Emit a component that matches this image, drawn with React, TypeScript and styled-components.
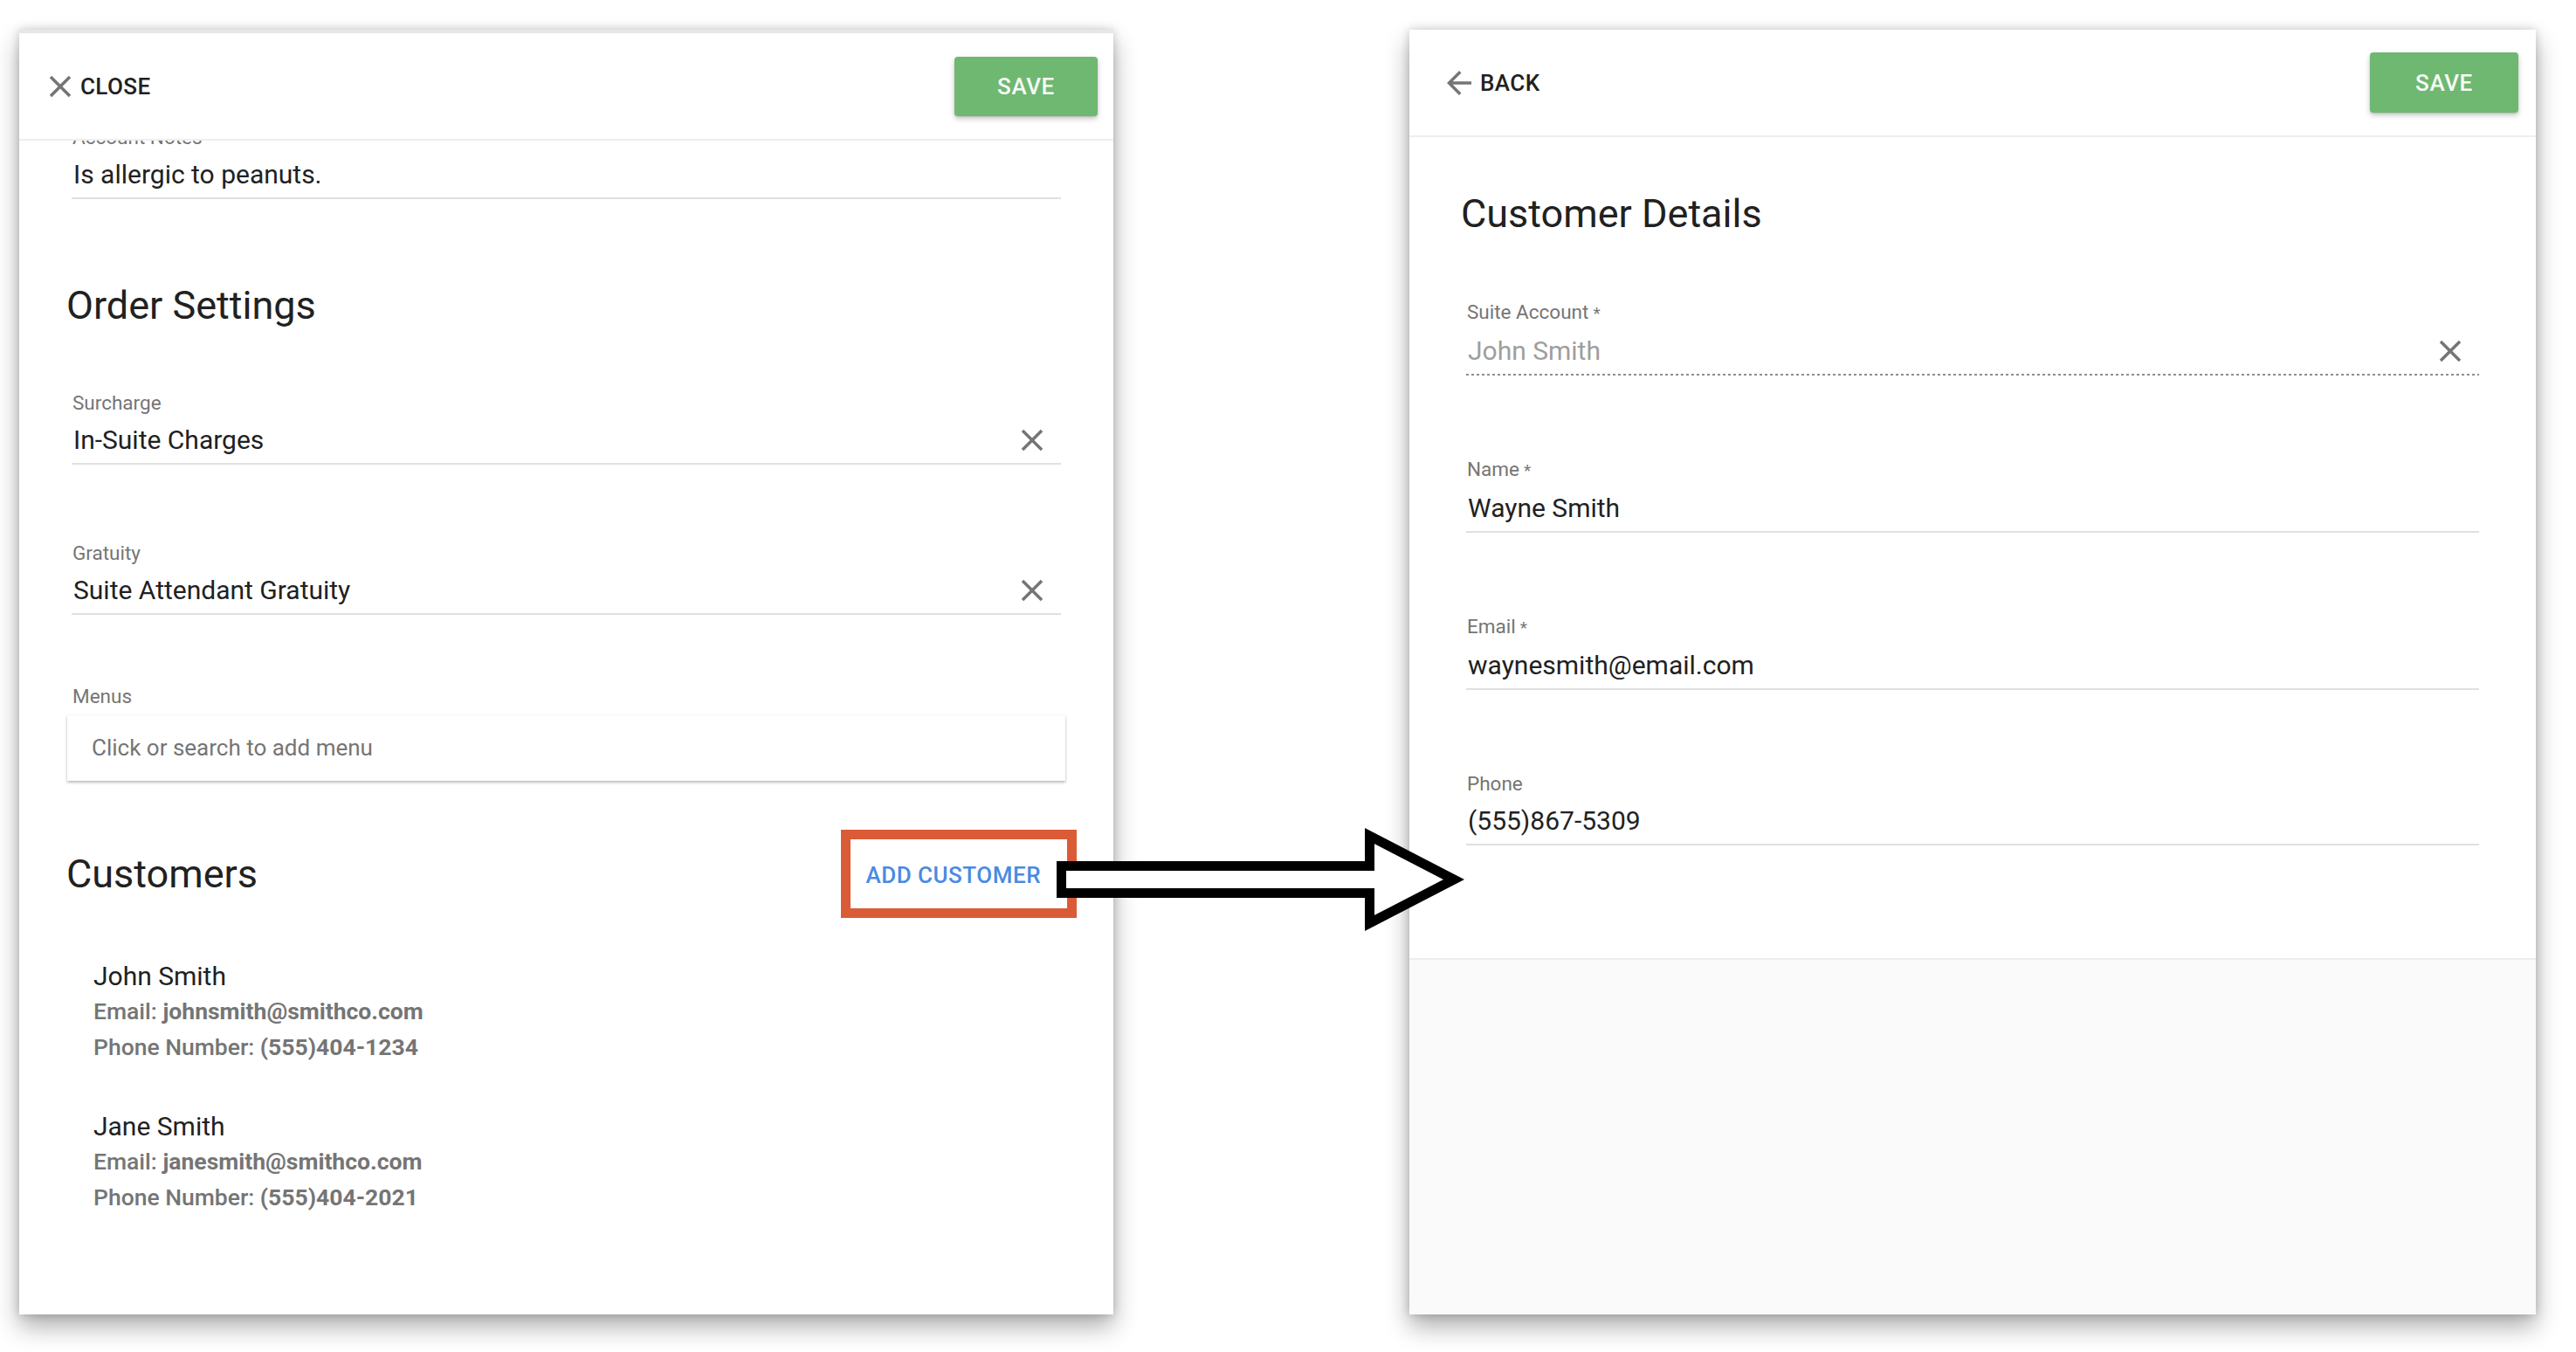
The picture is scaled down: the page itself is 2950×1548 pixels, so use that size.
import React from "react";
import styled, { createGlobalStyle } from "styled-components";

const GlobalStyle = createGlobalStyle`
  html, body { margin: 0; padding: 0; background: #ffffff; }
  body { font-family: Roboto, "Noto Sans", Arial, sans-serif; -webkit-font-smoothing: antialiased; }
  * { box-sizing: border-box; }
`;

const Page = styled.div`
  position: relative;
  width: 2950px;
  height: 1548px;
  overflow: hidden;
  display: flex;
  align-items: flex-start;
  padding: 34px 0 0 22px;
  gap: 339px;
`;

const Panel = styled.section<{ $w: number; $band?: boolean }>`
  width: ${(p) => p.$w}px;
  height: 1471px;
  flex: none;
  background: #ffffff;
  display: flex;
  flex-direction: column;
  border-top: ${(p) => (p.$band ? "4px solid #e7e7e7" : "none")};
  box-shadow: 0 14px 26px rgba(0, 0, 0, 0.32), 0 0 10px rgba(0, 0, 0, 0.18);
  overflow: hidden;
`;

const Header = styled.header<{ $pl: number; $pr: number }>`
  flex: none;
  height: 123px;
  border-bottom: 2px solid #eeeeee;
  display: flex;
  align-items: center;
  justify-content: space-between;
  padding: 0 ${(p) => p.$pr}px 0 ${(p) => p.$pl}px;
`;

const NavButton = styled.button<{ $gap: number }>`
  display: flex;
  align-items: center;
  gap: ${(p) => p.$gap}px;
  background: none;
  border: none;
  padding: 0;
  font-family: Roboto, Arial, sans-serif;
  font-size: 26px;
  font-weight: 500;
  letter-spacing: 0.4px;
  color: #212121;
  text-transform: uppercase;
  cursor: pointer;
`;

const Icon = styled.svg`
  width: 42px;
  height: 42px;
  fill: #757575;
  flex: none;
`;

const SaveButton = styled.button<{ $w: number; $h: number }>`
  width: ${(p) => p.$w}px;
  height: ${(p) => p.$h}px;
  background: #6fb871;
  color: rgba(255, 255, 255, 0.96);
  border: none;
  border-radius: 4px;
  font-family: Roboto, Arial, sans-serif;
  font-size: 26px;
  font-weight: 500;
  letter-spacing: 0.6px;
  box-shadow: 0 3px 6px rgba(0, 0, 0, 0.22), 0 1px 2px rgba(0, 0, 0, 0.12);
  cursor: pointer;
`;

const Body = styled.div<{ $px: number; $pb?: number; $grow?: boolean; $divider?: boolean }>`
  flex: ${(p) => (p.$grow ? "1 1 auto" : "none")};
  overflow: hidden;
  padding: 0 ${(p) => p.$px}px ${(p) => p.$pb ?? 0}px;
  border-bottom: ${(p) => (p.$divider ? "2px solid #eeeeee" : "none")};
  display: flex;
  flex-direction: column;
`;

const Footer = styled.div`
  flex: 1 1 auto;
  background: #fafafa;
`;

const Field = styled.div<{ $mt: number }>`
  margin: ${(p) => p.$mt}px 7px 0;
  flex: none;
`;

const FieldLabel = styled.label<{ $mt?: number; $mx?: number }>`
  display: block;
  margin: ${(p) => p.$mt ?? 0}px ${(p) => p.$mx ?? 0}px 0;
  padding-left: 1px;
  font-size: 22.5px;
  line-height: 26px;
  color: #757575;
  white-space: nowrap;
`;

const Required = styled.span`
  margin-left: 5px;
  font-size: 19px;
`;

const InputRow = styled.div<{ $disabled?: boolean }>`
  margin-top: 12px;
  display: flex;
  align-items: center;
  padding-bottom: ${(p) => (p.$disabled ? 10 : 8)}px;
  border-bottom: ${(p) => (p.$disabled ? "none" : "2px solid #e0e0e0")};
  background: ${(p) =>
    p.$disabled
      ? "linear-gradient(to right, #8e8e8e 0 3px, transparent 3px 6px) left bottom / 6px 2px repeat-x"
      : "none"};
`;

const InputText = styled.div<{ $disabled?: boolean }>`
  flex: 1 1 auto;
  padding-left: 2px;
  font-size: 30px;
  line-height: 36px;
  color: ${(p) => (p.$disabled ? "#9e9e9e" : "#212121")};
  white-space: nowrap;
`;

const ClearSlot = styled.span`
  flex: none;
  height: 36px;
  width: 42px;
  margin-right: 12px;
  display: flex;
  align-items: center;
  justify-content: center;
  overflow: visible;
`;

const SectionTitle = styled.h2<{ $mt: number }>`
  margin: ${(p) => p.$mt}px 0 0;
  padding-left: 1px;
  font-size: 45px;
  line-height: 48px;
  font-weight: 400;
  color: #212121;
  white-space: nowrap;
`;

const MenuBox = styled.div`
  margin: 9px 2px 0;
  height: 75px;
  background: #ffffff;
  box-shadow: 0 2px 3px rgba(0, 0, 0, 0.26), 0 0 2px rgba(0, 0, 0, 0.08);
  display: flex;
  align-items: center;
  padding-left: 28px;
  font-size: 26px;
  color: #757575;
`;

const CustomersRow = styled.div<{ $mt: number }>`
  margin: ${(p) => p.$mt}px -11px 0 0;
  display: flex;
  align-items: center;
  justify-content: space-between;
`;

const Highlight = styled.div`
  height: 101px;
  border: 11px solid #d95c36;
  padding: 2px 30px 0 17px;
  display: flex;
  align-items: center;
`;

const AddButton = styled.button`
  background: none;
  border: none;
  padding: 0;
  font-family: Roboto, Arial, sans-serif;
  font-size: 26px;
  font-weight: 500;
  letter-spacing: 0.5px;
  color: #4a8ae3;
  text-transform: uppercase;
  cursor: pointer;
`;

const CustomerList = styled.div`
  margin-top: 47px;
  padding-left: 32px;
`;

const CustomerEntry = styled.div<{ $mt: number }>`
  margin-top: ${(p) => p.$mt}px;
`;

const CustomerName = styled.div`
  font-size: 30px;
  line-height: 40px;
  color: #212121;
`;

const CustomerDetail = styled.div`
  font-size: 26.5px;
  line-height: 40.5px;
  font-weight: 500;
  color: #757575;
  & > strong {
    font-weight: 700;
  }
`;

const ArrowOverlay = styled.svg`
  position: absolute;
  left: 1200px;
  top: 940px;
  width: 490px;
  height: 135px;
  pointer-events: none;
  overflow: visible;
`;

const CLOSE_PATH =
  "M19 6.41L17.59 5 12 10.59 6.41 5 5 6.41 10.59 12 5 17.59 6.41 19 12 13.41 17.59 19 19 17.59 13.41 12z";
const BACK_PATH = "M20 11H7.83l5.59-5.59L12 4l-8 8 8 8 1.41-1.41L7.83 13H20v-2z";

const CloseIcon = () => (
  <Icon viewBox="0 0 24 24">
    <path d={CLOSE_PATH} />
  </Icon>
);

const BackIcon = () => (
  <Icon viewBox="0 0 24 24">
    <path d={BACK_PATH} />
  </Icon>
);

type FieldProps = {
  mt: number;
  label: string;
  value: string;
  required?: boolean;
  clearable?: boolean;
  disabled?: boolean;
};

const TextField = ({ mt, label, value, required, clearable, disabled }: FieldProps) => (
  <Field $mt={mt}>
    <FieldLabel>
      {label}
      {required && <Required>*</Required>}
    </FieldLabel>
    <InputRow $disabled={disabled}>
      <InputText $disabled={disabled}>{value}</InputText>
      {clearable && (
        <ClearSlot>
          <CloseIcon />
        </ClearSlot>
      )}
    </InputRow>
  </Field>
);

const customers = [
  { name: "John Smith", email: "johnsmith@smithco.com", phone: "(555)404-1234" },
  { name: "Jane Smith", email: "janesmith@smithco.com", phone: "(555)404-2021" },
];

export default function App() {
  return (
    <>
      <GlobalStyle />
      <Page>
        <Panel $w={1253} $band>
          <Header $pl={26} $pr={18}>
            <NavButton $gap={2}>
              <CloseIcon />
              Close
            </NavButton>
            <SaveButton $w={164} $h={68}>SAVE</SaveButton>
          </Header>
          <Body $px={53} $grow>
            <TextField mt={-17.3} label="Account Notes" value="Is allergic to peanuts." />
            <SectionTitle $mt={98.6}>Order Settings</SectionTitle>
            <TextField mt={73.5} label="Surcharge" value="In-Suite Charges" clearable />
            <TextField mt={88} label="Gratuity" value="Suite Attendant Gratuity" clearable />
            <FieldLabel $mt={80} $mx={7}>
              Menus
            </FieldLabel>
            <MenuBox>Click or search to add menu</MenuBox>
            <CustomersRow $mt={56.5}>
              <SectionTitle $mt={0}>Customers</SectionTitle>
              <Highlight>
                <AddButton>Add Customer</AddButton>
              </Highlight>
            </CustomersRow>
            <CustomerList>
              {customers.map((c, i) => (
                <CustomerEntry key={c.name} $mt={i === 0 ? 0 : 51}>
                  <CustomerName>{c.name}</CustomerName>
                  <CustomerDetail>
                    Email: <strong>{c.email}</strong>
                  </CustomerDetail>
                  <CustomerDetail>
                    Phone Number: <strong>{c.phone}</strong>
                  </CustomerDetail>
                </CustomerEntry>
              ))}
            </CustomerList>
          </Body>
        </Panel>

        <Panel $w={1290}>
          <Header $pl={36} $pr={20}>
            <NavButton $gap={3}>
              <BackIcon />
              Back
            </NavButton>
            <SaveButton $w={170} $h={69}>SAVE</SaveButton>
          </Header>
          <Body $px={58} $pb={129} $divider>
            <SectionTitle $mt={64.3}>Customer Details</SectionTitle>
            <TextField mt={74.5} label="Suite Account" value="John Smith" required clearable disabled />
            <TextField mt={94} label="Name" value="Wayne Smith" required />
            <TextField mt={94} label="Email" value="waynesmith@email.com" required />
            <TextField mt={94} label="Phone" value="(555)867-5309" />
          </Body>
          <Footer />
        </Panel>

        <ArrowOverlay viewBox="0 0 490 135">
          <polygon
            points="15.5,51.5 368.5,51.5 368.5,17 465,67 368.5,117 368.5,82.5 15.5,82.5"
            fill="#ffffff"
            stroke="#000000"
            strokeWidth={11}
            strokeLinejoin="miter"
            strokeMiterlimit={10}
          />
        </ArrowOverlay>
      </Page>
    </>
  );
}
